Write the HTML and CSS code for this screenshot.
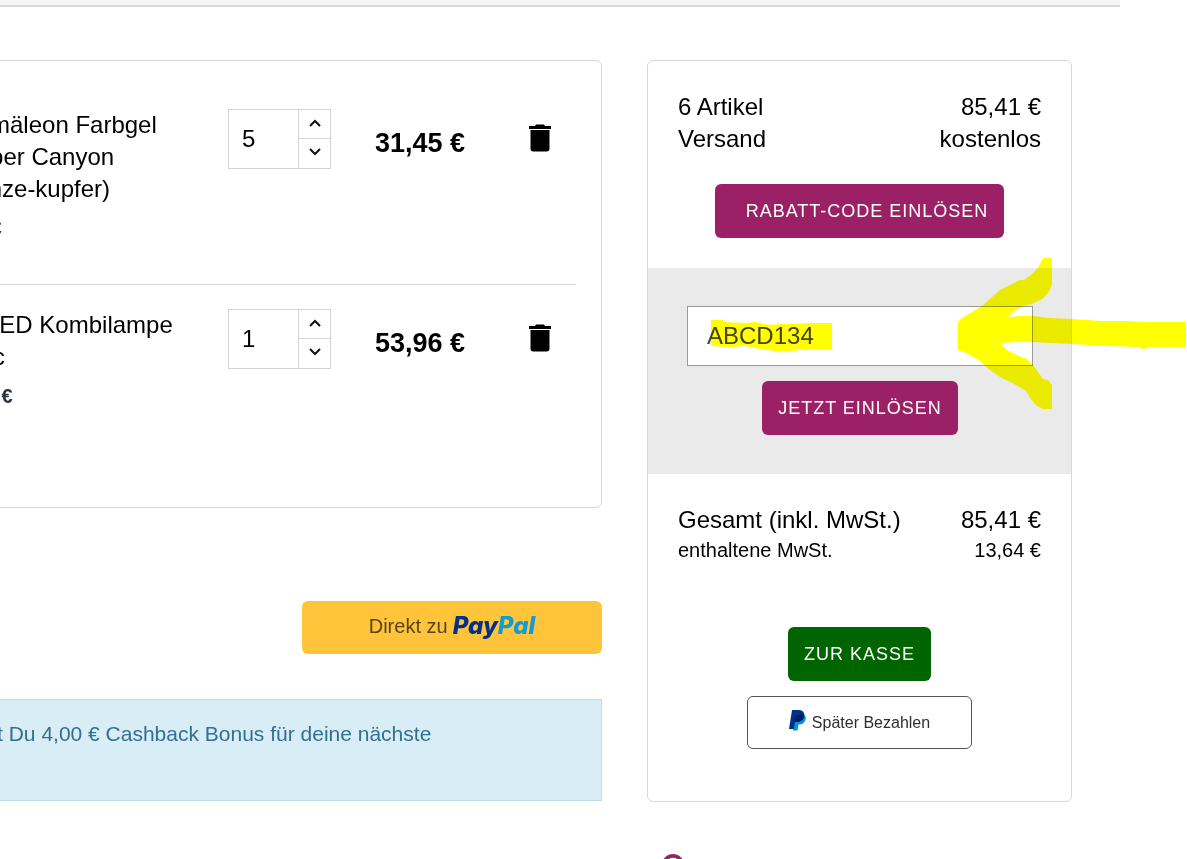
FILE: index.html
```html
<!DOCTYPE html>
<html lang="de">
<head>
<meta charset="utf-8">
<title>Warenkorb</title>
<link rel="stylesheet" href="styles.css">
</head>
<body>
<header class="topbar"></header>
<main class="page">
  <div class="cart-column">
    <section class="cart">
      <article class="item">
        <div class="item-info">
          <h2 class="item-name">Chamäleon Farbgel<br>Copper Canyon<br>(bronze-kupfer)</h2>
          <p class="item-unit">6,29 €</p>
        </div>
        <div class="stepper">
          <input class="stepper-value" type="text" value="5" aria-label="Menge Farbgel">
          <div class="stepper-buttons">
            <button class="stepper-btn" type="button" aria-label="Mehr"><svg class="chevron" viewBox="0 0 12 8"><path d="M1 7l5-5 5 5"/></svg></button>
            <button class="stepper-btn" type="button" aria-label="Weniger"><svg class="chevron" viewBox="0 0 12 8"><path d="M1 1l5 5 5-5"/></svg></button>
          </div>
        </div>
        <strong class="item-total">31,45 €</strong>
        <button class="remove" type="button" aria-label="Entfernen"><svg class="trash" viewBox="0 0 22 28"><path d="M0 2H6L7 .5H15L16 2H22V5H0zM1.500 6H20.500V24.500Q20.500 27.500 17.500 27.500H4.500Q1.500 27.500 1.500 24.500z"/></svg></button>
      </article>
      <article class="item">
        <div class="item-info">
          <h2 class="item-name">UV/LED Kombilampe<br>Basic</h2>
          <p class="item-unit">53,96 €</p>
        </div>
        <div class="stepper">
          <input class="stepper-value" type="text" value="1" aria-label="Menge Kombilampe">
          <div class="stepper-buttons">
            <button class="stepper-btn" type="button" aria-label="Mehr"><svg class="chevron" viewBox="0 0 12 8"><path d="M1 7l5-5 5 5"/></svg></button>
            <button class="stepper-btn" type="button" aria-label="Weniger"><svg class="chevron" viewBox="0 0 12 8"><path d="M1 1l5 5 5-5"/></svg></button>
          </div>
        </div>
        <strong class="item-total">53,96 €</strong>
        <button class="remove" type="button" aria-label="Entfernen"><svg class="trash" viewBox="0 0 22 28"><path d="M0 2H6L7 .5H15L16 2H22V5H0zM1.500 6H20.500V24.500Q20.500 27.500 17.500 27.500H4.500Q1.500 27.500 1.500 24.500z"/></svg></button>
      </article>
    </section>
    <button class="paypal-direct" type="button"><span>Direkt zu</span> <span class="paypal-logo"><span class="pay">Pay</span><span class="pal">Pal</span></span></button>
    <p class="cashback">erhältst Du 4,00 € Cashback Bonus für deine nächste</p>
  </div>
  <aside class="side">
    <section class="summary">
      <dl class="totals">
        <div class="row"><dt>6 Artikel</dt><dd>85,41 €</dd></div>
        <div class="row"><dt>Versand</dt><dd>kostenlos</dd></div>
      </dl>
      <button class="btn btn-toggle" type="button">RABATT-CODE EINLÖSEN</button>
      <form class="coupon">
        <input class="coupon-input" type="text" value="ABCD134" aria-label="Rabatt-Code">
        <button class="btn" type="button">JETZT EINLÖSEN</button>
        <svg class="marker" viewBox="648 258 540 152" aria-hidden="true">
          <path d="M711 320L723 320 724 322 745 323 755 322 770 325 780 324 793 324 810 323 832 323V349L815 349 800 350 790 351 775 351 760 349 745 346 730 347 711 346z"/>
          <path d="M1043 258H1052V284Q1050 293 1042 299L1032 304 1024 306 1014 311 1008 317 1020 316 1033 316 1050 318 1072 319 1100 321 1125 321 1150 322 1186 322V348L1165 347 1150 347 1144 349 1138 347 1110 346 1072 344 1050 343 1033 342 1020 342 1000 343 1007 350 1013 353 1021 357 1027 359 1033 365 1038 372 1043 379 1048 380 1052 385V409H1043L1036 405 1030 398 1026 391 1018 386 1010 382 1000 377 990 370 980 361 970 355 964 352 958 350V322L962 318 982 306 991 298 1000 290 1012 284 1020 280 1024 280 1032 274 1038 268z"/>
        </svg>
      </form>
      <dl class="totals totals-sum">
        <div class="row"><dt>Gesamt (inkl. MwSt.)</dt><dd>85,41 €</dd></div>
        <div class="row row-small"><dt>enthaltene MwSt.</dt><dd>13,64 €</dd></div>
      </dl>
      <button class="btn btn-checkout" type="button">ZUR KASSE</button>
      <button class="pay-later" type="button">
        <svg class="pp" viewBox="0 0 17 21" aria-hidden="true"><path fill="#0093d8" d="M6 7L15 4Q18 7 16 11Q14 15 9.500 14.500L8.500 20.500H4z"/><path fill="#003087" d="M3 0H10Q16 .5 15 6Q14 12 8 12H6L4.800 19H0z"/><path fill="#001c64" d="M6 6Q10 4 15 4.500Q15 12 8 12H5z"/></svg>
        <span>Später Bezahlen</span>
      </button>
    </section>
    <svg class="badge" viewBox="0 0 22 22" aria-hidden="true"><circle cx="11" cy="11" r="11" fill="#9b2066"/><path d="M7 9Q7 5 11 5Q15 5 15 8.500Q15 10.500 11 12.500V14" fill="none" stroke="#fff" stroke-width="2.500"/><circle cx="11" cy="17" r="1.500" fill="#fff"/></svg>
  </aside>
</main>
</body>
</html>
```
FILE: styles.css
```css
* { box-sizing: border-box; }
html { overflow: hidden; }
body {
  margin: 0;
  height: 100vh;
  overflow: hidden;
  background: #fff;
  color: #000;
  font: 24px/32px "Liberation Sans", Arial, sans-serif;
}
button, input { font: inherit; color: inherit; }
button { cursor: pointer; }
h2, p, dl, dd { margin: 0; }
.topbar {
  height: 7px;
  margin-right: 67px;
  background: #f5f5f5;
  border-bottom: 2px solid #d9d9d9;
}
.page {
  display: grid;
  grid-template-columns: minmax(0, 1fr) 425px;
  column-gap: 45px;
  align-items: start;
  padding: 53px 115px 0 0;
}
.cart-column { display: flex; flex-direction: column; margin-left: -86px; }
.cart {
  border: 1px solid #d9d9d9;
  border-radius: 6px;
  padding: 24px 25px 24px 31px;
}
.item {
  display: grid;
  grid-template-columns: minmax(0, 1fr) 103px 134px 86px;
  align-items: start;
  min-height: 199px;
  padding: 24px 25px 0 0;
}
.item + .item { border-top: 1px solid #d9d9d9; }
.item-name { font-size: 24px; font-weight: 400; line-height: 32px; }
.item-unit { margin-top: 7px; font-size: 20px; font-weight: 700; line-height: 32px; color: #2b333b; }
.stepper { display: flex; height: 60px; border: 1px solid #d3d3d3; }
.stepper-value { flex: 1; min-width: 0; padding: 0 13px; border: 0; background: none; }
.stepper-buttons { display: grid; grid-template-rows: 28px 1fr; width: 32px; border-left: 1px solid #d3d3d3; }
.stepper-btn { display: flex; align-items: center; justify-content: center; padding: 0 0 3px; border: 0; background: none; }
.stepper-btn + .stepper-btn { border-top: 1px solid #d3d3d3; }
.chevron { width: 12px; height: 8px; fill: none; stroke: #111; stroke-width: 2; }
.item-total { padding-top: 18px; font-size: 27px; text-align: right; }
.remove { justify-self: end; margin-top: 15px; padding: 0; border: 0; background: none; line-height: 0; }
.trash { width: 22px; height: 28px; }
.paypal-direct {
  align-self: flex-end;
  display: flex;
  justify-content: center;
  align-items: center;
  gap: 5px;
  width: 300px;
  height: 53px;
  margin-top: 93px;
  padding-bottom: 4px;
  border: 0;
  border-radius: 6px;
  background: #ffc439;
  color: #59431c;
  font-size: 20px;
}
.paypal-logo { font: italic 800 24px/32px Inter, sans-serif; }
.pay { color: #003087; }
.pal { color: #129bd5; }
.cashback {
  height: 102px;
  margin-top: 45px;
  padding: 18px 19px;
  border: 1px solid #bcdfe9;
  background: #d9edf7;
  color: #31708f;
  font-size: 21px;
}
.summary {
  display: flex;
  flex-direction: column;
  align-items: center;
  padding-bottom: 52px;
  border: 1px solid #d9d9d9;
  border-radius: 6px;
}
.totals { width: 100%; padding: 30px 30px 29px; }
.row { display: flex; justify-content: space-between; }
.totals-sum { padding-bottom: 63px; }
.row-small { font-size: 20px; line-height: 28px; }
.btn {
  height: 54px;
  padding: 0 16px;
  border: 0;
  border-radius: 6px;
  background: #9b2066;
  color: #fff;
  font-size: 18px;
  letter-spacing: 1px;
}
.btn-toggle { padding-left: 31px; }
.coupon {
  position: relative;
  display: flex;
  flex-direction: column;
  align-items: center;
  gap: 15px;
  width: 100%;
  margin-top: 30px;
  padding: 38px 38px 39px 39px;
  background: #eaeaea;
}
.coupon-input {
  width: 100%;
  height: 60px;
  padding: 0 19px;
  border: 1px solid #999;
  border-radius: 0;
  background: #fff;
  color: #444;
}
.marker {
  position: absolute;
  left: 0;
  top: -10px;
  width: 540px;
  height: 152px;
  fill: #ff0;
  mix-blend-mode: multiply;
  pointer-events: none;
}
.btn-checkout { background: #006400; }
.pay-later {
  display: flex;
  justify-content: center;
  align-items: center;
  gap: 6px;
  width: 225px;
  height: 53px;
  margin-top: 15px;
  border: 1px solid #555;
  border-radius: 6px;
  background: #fff;
  color: #2c2e2f;
  font-size: 16px;
}
.pp { width: 17px; height: 21px; margin-bottom: 4px; }
.badge { display: block; width: 22px; height: 22px; margin: 52px 0 0 15px; }
```
